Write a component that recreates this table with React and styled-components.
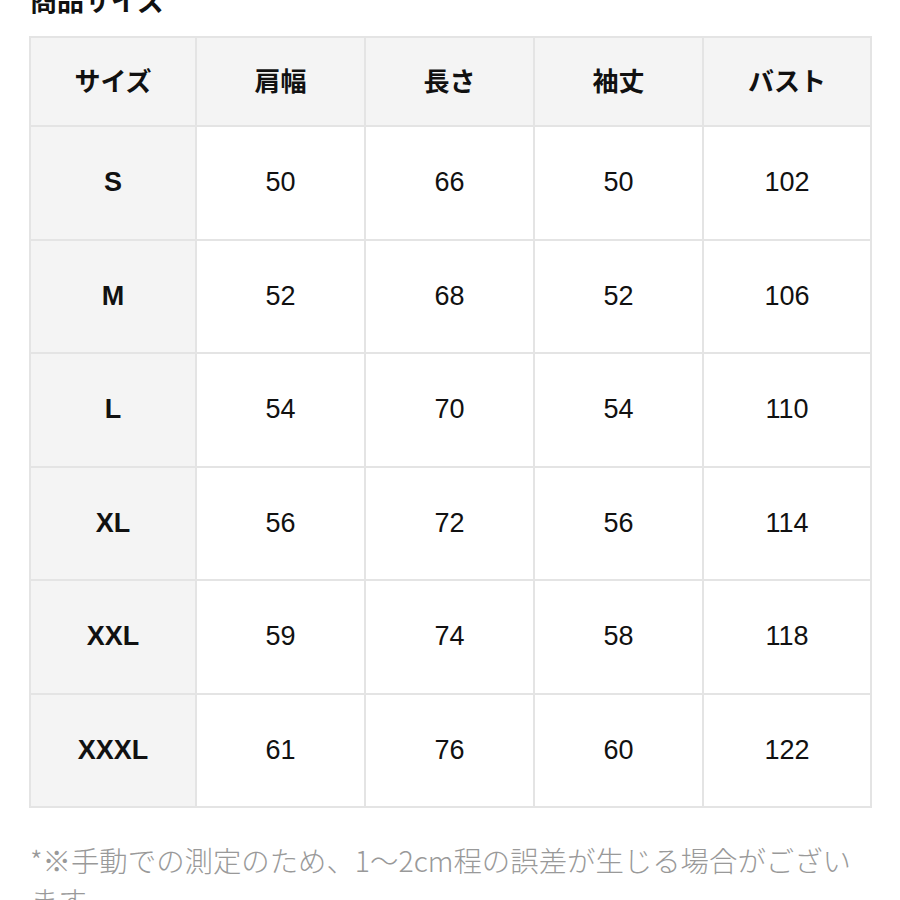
import React from "react";
import styled, { createGlobalStyle } from "styled-components";

const Global = createGlobalStyle`
  html, body { margin: 0; padding: 0; background: #fff; }
  body { font-family: "Liberation Sans", "Noto Sans CJK JP", sans-serif; color: #111; }
`;

const Page = styled.div`
  width: 900px;
  height: 900px;
  overflow: hidden;
  padding: 0 30px 0 29px;
  box-sizing: border-box;
`;

const Title = styled.h2`
  margin: -18px 0 0 1px;
  font-size: 27px;
  line-height: 36px;
  font-weight: 700;
  font-family: "Noto Sans CJK JP", sans-serif;
  color: #111;
  height: 36px;
`;

const Wrap = styled.div`
  margin-top: 18px;
`;

const Table = styled.table`
  width: 841px;
  border-collapse: collapse;
  table-layout: fixed;
  border: 2px solid #e4e4e4;
`;

const Col = styled.col`
  width: ${(p) => p.$w}px;
`;

const Cell = styled.td`
  border: 2px solid #e4e4e4;
  height: ${(p) => (p.$head ? "83px" : "111.5px")};
  text-align: center;
  vertical-align: middle;
  padding: 0 0 ${(p) => (p.$head ? "4px" : "0")};
  background: ${(p) => (p.$gray ? "#f4f4f4" : "#fff")};
  font-size: ${(p) => (p.$jp ? "26px" : "27px")};
  font-weight: ${(p) => (p.$bold ? 700 : 400)};
  font-family: ${(p) =>
    p.$jp ? '"Noto Sans CJK JP", sans-serif' : '"Liberation Sans", "Noto Sans CJK JP", sans-serif'};
  color: #111;
`;

const Note = styled.p`
  margin: 32px 0 0 1px;
  font-family: "Noto Sans CJK JP", sans-serif;
  font-weight: 300;
  font-size: 28.4px;
  line-height: 40px;
  color: #999;
  width: 848px;
`;

const headers = ["サイズ", "肩幅", "長さ", "袖丈", "バスト"];
const widths = [166, 169, 169, 169, 168];
const rows = [
  ["S", 50, 66, 50, 102],
  ["M", 52, 68, 52, 106],
  ["L", 54, 70, 54, 110],
  ["XL", 56, 72, 56, 114],
  ["XXL", 59, 74, 58, 118],
  ["XXXL", 61, 76, 60, 122],
];

export default function App() {
  return (
    <Page>
      <Global />
      <Title>商品サイズ</Title>
      <Wrap>
        <Table>
          <colgroup>
            {widths.map((w, i) => (
              <Col key={i} $w={w} />
            ))}
          </colgroup>
          <thead>
            <tr>
              {headers.map((h) => (
                <Cell as="th" key={h} $head $gray $bold $jp>
                  {h}
                </Cell>
              ))}
            </tr>
          </thead>
          <tbody>
            {rows.map((r) => (
              <tr key={r[0]}>
                {r.map((v, i) => (
                  <Cell key={i} $gray={i === 0} $bold={i === 0}>
                    {v}
                  </Cell>
                ))}
              </tr>
            ))}
          </tbody>
        </Table>
      </Wrap>
      <Note>*※手動での測定のため、1〜2cm程の誤差が生じる場合がございます。</Note>
    </Page>
  );
}
